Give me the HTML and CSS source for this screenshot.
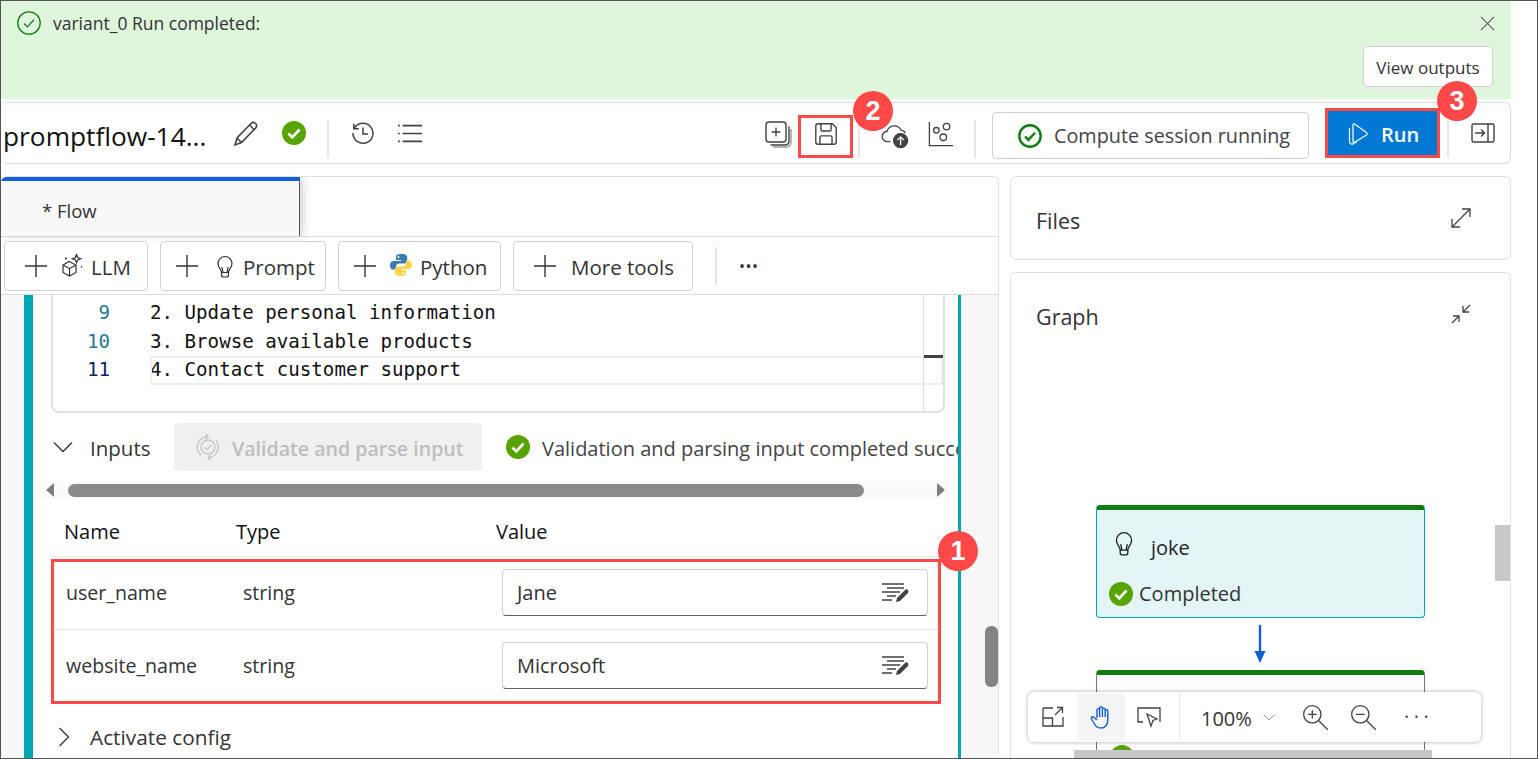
FILE: index.html
```html
<!DOCTYPE html>
<html lang="en">
<head>
  <meta charset="UTF-8" />
  <title>Prompt flow</title>
  <link rel="stylesheet" href="styles.css">
</head>
<body>
<div class="shot">

  <!-- Run banner -->
  <div class="banner">
    <div class="banner-msg">
      <svg class="ic24" viewBox="0 0 24 24" fill="none" stroke="#107c10" stroke-width="1.3"><circle cx="12" cy="12" r="11.2"/><path d="M7 12.5l3.4 3.4L17 8.8"/></svg>
      <span>variant_0 Run completed:</span>
    </div>
    <div class="banner-side">
      <svg class="close" viewBox="0 0 16 16" fill="none" stroke="#555" stroke-width="1.1"><path d="M1 1l14 14M15 1L1 15"/></svg>
      <button class="view-btn">View outputs</button>
    </div>
  </div>

  <!-- Flow toolbar -->
  <div class="toolbar">
    <span class="flow-name">promptflow-14...</span>
    <svg class="ic28 pencil" viewBox="0 0 28 28" fill="none" stroke="#424242" stroke-width="1.6"><path d="M3 25l2-7L19 3.500c1.500-1.400 3.300-1.200 4.600 0s1.400 3.200 0 4.600L9.500 22.500z"/><path d="M5 18l4.500 4.500M17.500 5l5 5"/></svg>
    <svg class="ic24 status" viewBox="0 0 24 24"><circle cx="12" cy="12" r="12" fill="#57a300"/><path d="M6.500 12.500l3.800 3.800 7.200-7.800" fill="none" stroke="#fff" stroke-width="2.600"/></svg>
    <i class="vline v1"></i>
    <svg class="ic24 hist" viewBox="0 0 24 24" fill="none" stroke="#424242" stroke-width="1.500"><path d="M3.200 7.500A10 10 0 1 1 2 12"/><path d="M2.800 2.800v5h5M12 6.500V13h5"/></svg>
    <svg class="ic28 list" viewBox="0 0 28 22" fill="none" stroke="#424242" stroke-width="1.700"><path d="M6 2.500h21M6 11h21M6 19.500h21M1 2.500h2M1 11h2M1 19.500h2"/></svg>

    <div class="toolbar-right">
      <svg class="ic28 t-add" viewBox="0 0 28 28" fill="none" stroke="#424242" stroke-width="1.400"><rect x="2" y="2" width="20" height="20" rx="3"/><path d="M12 7.500v9M7.500 12h9M25 6.500V21c0 2.500-1.500 4-4 4H6.500"/><path d="M27 9v13c0 3-2 5-5 5H9" stroke="#999"/></svg>
      <svg class="ic28 t-save" viewBox="0 0 28 28" fill="none" stroke="#424242" stroke-width="1.500"><path d="M3 5.500C3 4 4 3 5.500 3h15.500L25 7v15.500c0 1.500-1 2.500-2.500 2.500h-17C4 25 3 24 3 22.500z"/><path d="M8.500 3v6.500c0 .8.500 1.300 1.300 1.300h8.400c.8 0 1.300-.5 1.300-1.300V3M7.500 25v-7.500c0-1 .5-1.500 1.500-1.500h10c1 0 1.500.5 1.500 1.500V25"/></svg>
      <i class="vline v2"></i>
      <svg class="ic28 t-cloud" viewBox="0 0 30 30" fill="none" stroke="#424242" stroke-width="1.400"><path d="M10 22H7a5.500 5.500 0 0 1-.5-11A8 8 0 0 1 21.500 10a5 5 0 0 1 4.500 3"/><circle cx="21" cy="21" r="7.500" fill="#424242"/><path d="M21 26v-9M17.500 20.500L21 17l3.500 3.500" stroke="#fff"/></svg>
      <svg class="ic28 t-graph" viewBox="0 0 28 28" fill="none" stroke="#424242" stroke-width="1.400"><path d="M1.500 1v25.500H27"/><circle cx="9" cy="10" r="3"/><circle cx="20" cy="6" r="3.500"/><circle cx="16.500" cy="17.500" r="3.500"/></svg>
      <i class="vline v3"></i>
      <button class="compute-btn">
        <svg class="ic24" viewBox="0 0 24 24" fill="none"><circle cx="12" cy="12" r="10.700" stroke="#107c10" stroke-width="2.400"/><path d="M7 12.500l3.400 3.400L17 8.800" stroke="#107c10" stroke-width="2.400"/></svg>
        <span>Compute session running</span>
      </button>
      <button class="run-btn">
        <svg class="run-ic" viewBox="0 0 20 22" fill="none" stroke="#fff" stroke-width="1.200"><path d="M5 2c0-.9.800-1.300 1.500-.9L18.500 9.500c.9.600.9 1.900 0 2.500L6.500 19.300c-.7.400-1.500 0-1.500-.9z"/><path d="M1.500 5v13c0 2.800 2 3.800 4.200 2.600l3-1.800"/></svg>
        <span>Run</span>
      </button>
      <i class="vline v4"></i>
      <svg class="ic24 t-panel" viewBox="0 0 24 20" fill="none" stroke="#424242" stroke-width="1.400"><rect x="1" y="1" width="22" height="18" rx="1.500"/><path d="M17 1v18M4 10h9M10 6.500l3.500 3.500-3.500 3.500"/></svg>
    </div>
  </div>

  <div class="main">

    <!-- Left: flow editor -->
    <section class="card flow-panel">
      <div class="tabs">
        <div class="tab">* Flow</div>
      </div>
      <div class="tools">
        <button class="tool-btn">
          <svg class="plus" viewBox="0 0 22 22" stroke="#333" stroke-width="1.400"><path d="M11 0v22M0 11h22"/></svg>
          <svg class="ic24 tool-ic" viewBox="0 0 24 24" fill="none" stroke="#333" stroke-width="1.200"><path d="M9 8.500l7 3.500v7.500l-6.500 3.500L3 19.500V12zM3 12l6.500 3.500v7.500M9.500 15.500l6.500-3.500"/><path d="M16.500 1.500l1.200 3 3 1.200-3 1.200-1.200 3-1.200-3-3-1.200 3-1.200zM5 5.500h2M6 4.500v2M21.500 13v1.500"/></svg>
          <span>LLM</span>
        </button>
        <button class="tool-btn">
          <svg class="plus" viewBox="0 0 22 22" stroke="#333" stroke-width="1.400"><path d="M11 0v22M0 11h22"/></svg>
          <svg class="ic24 tool-ic bulb" viewBox="3 0 18 24" fill="none" stroke="#333" stroke-width="1.200"><path d="M8.500 18.500c0-3-3.500-4.500-3.500-9a7 7 0 0 1 14 0c0 4.500-3.500 6-3.500 9z"/><path d="M8.500 18.500v2.500c0 1.200 1 2 2 2h3c1 0 2-.8 2-2v-2.500M9 13l1 5.500M15 13l-1 5.500M9 8.500v.1M12 7.500v.1M15 8.500v.1"/></svg>
          <span>Prompt</span>
        </button>
        <button class="tool-btn">
          <svg class="plus" viewBox="0 0 22 22" stroke="#333" stroke-width="1.400"><path d="M11 0v22M0 11h22"/></svg>
          <svg class="ic24 tool-ic" viewBox="0 0 24 24"><path fill="#3a7cb2" d="M11.800 1C7 1 7 3 7 4.500V7h5v1H4.500C2.500 8 1 9.500 1 12.200S2.300 16.500 4.300 16.500H7v-2.700c0-2 1.700-3.300 3.500-3.300h5c1.500 0 2.700-1.200 2.700-2.700V4C18.200 2 16 1 11.800 1zM9.500 3a1 1 0 1 1 0 2 1 1 0 0 1 0-2z"/><path fill="#fdd44b" d="M12.200 23c4.800 0 4.800-2 4.800-3.500V17h-5v-1h7.500c2 0 3.500-1.500 3.500-4.200s-1.300-4.300-3.300-4.300H17v2.700c0 2-1.700 3.300-3.500 3.300h-5c-1.500 0-2.700 1.200-2.700 2.700V20C5.800 22 8 23 12.200 23zM14.500 21a1 1 0 1 1 0-2 1 1 0 0 1 0 2z"/></svg>
          <span>Python</span>
        </button>
        <button class="tool-btn more">
          <svg class="plus" viewBox="0 0 22 22" stroke="#333" stroke-width="1.400"><path d="M11 0v22M0 11h22"/></svg>
          <span>More tools</span>
        </button>
        <i class="vline v5"></i>
        <span class="dots">•••</span>
      </div>

      <div class="node-area">
        <div class="gutter"></div>
        <div class="node">
          <div class="editor">
            <div class="editor-lines">
              <div class="line"><span class="ln">9</span><span>2. Update personal information</span></div>
              <div class="line"><span class="ln">10</span><span>3. Browse available products</span></div>
              <div class="line cur"><span class="ln dark">11</span><span class="cur-text">4. Contact customer support</span></div>
            </div>
          </div>

          <div class="inputs-row">
            <svg class="chev" viewBox="0 0 20 12" fill="none" stroke="#333" stroke-width="1.300"><path d="M1 1.500l9 9 9-9"/></svg>
            <span class="sect">Inputs</span>
            <button class="validate-btn">
              <svg class="val-ic" viewBox="0 0 24 28" fill="none" stroke="#c4c4c4" stroke-width="1.300"><circle cx="12" cy="14" r="7"/><path d="M8.500 14.200l2.500 2.500 4.500-4.800"/><path d="M12 3.500A10.500 10.500 0 0 0 5.500 22.300M20 7.500A10.500 10.500 0 0 1 12 24.500"/><path d="M9.500 1L12 3.500 9.500 6M14.500 22l-2.500 2.500 2.500 2.500"/></svg>
              <span>Validate and parse input</span>
            </button>
            <svg class="ic24" viewBox="0 0 24 24"><circle cx="12" cy="12" r="12" fill="#57a300"/><path d="M6.500 12.500l3.800 3.800 7.200-7.800" fill="none" stroke="#fff" stroke-width="2.600"/></svg>
            <span class="valid-msg">Validation and parsing input completed successfully</span>
          </div>

          <div class="hscroll">
            <i class="arr-l"></i>
            <div class="hthumb"></div>
            <i class="arr-r"></i>
          </div>

          <div class="thead">
            <span class="th-name">Name</span>
            <span class="th-type">Type</span>
            <span>Value</span>
          </div>

          <div class="rows">
            <div class="row">
              <span class="c-name">user_name</span>
              <span class="c-type">string</span>
              <div class="val-box"><span>Jane</span><svg class="ic28" viewBox="0 0 28 24" fill="none" stroke="#424242" stroke-width="1.300"><path d="M1 3h22M6 7h17M1 11h18M6 15h9M1 19h10"/><path d="M15 21l1-4 8-8c1-1 2.500-1 3 0s.5 2 0 3l-8 8z" fill="#424242" stroke="none"/></svg></div>
            </div>
            <div class="row">
              <span class="c-name">website_name</span>
              <span class="c-type">string</span>
              <div class="val-box"><span>Microsoft</span><svg class="ic28" viewBox="0 0 28 24" fill="none" stroke="#424242" stroke-width="1.300"><path d="M1 3h22M6 7h17M1 11h18M6 15h9M1 19h10"/><path d="M15 21l1-4 8-8c1-1 2.500-1 3 0s.5 2 0 3l-8 8z" fill="#424242" stroke="none"/></svg></div>
            </div>
          </div>

          <div class="config-row">
            <svg class="chev-r" viewBox="0 0 12 20" fill="none" stroke="#333" stroke-width="1.300"><path d="M1.500 1l9 9-9 9"/></svg>
            <span class="sect">Activate config</span>
          </div>
        </div>
        <div class="side-track"><div class="side-thumb"></div></div>
      </div>
    </section>

    <!-- Right: files and graph -->
    <div class="right-col">
      <section class="card files">
        <span class="card-title">Files</span>
        <svg class="ic20" viewBox="0 0 20 20" fill="none" stroke="#424242" stroke-width="1.300"><path d="M1 19L19 1M11 1h8v8M1 11v8h8"/></svg>
      </section>
      <section class="card graph">
        <div class="graph-head">
          <span class="card-title">Graph</span>
          <svg class="ic20" viewBox="0 0 20 20" fill="none" stroke="#424242" stroke-width="1.300"><path d="M1 19l6.500-6.500M2 12h6v6M19 1l-6.500 6.500M18 8h-6V2"/></svg>
        </div>

        <div class="gnode joke">
          <div class="gnode-title">
            <svg class="bulb-lg" viewBox="3 0 18 24" fill="none" stroke="#222" stroke-width="1.200"><path d="M8.500 18.500c0-3-3.500-4.500-3.500-9a7 7 0 0 1 14 0c0 4.500-3.500 6-3.500 9z"/><path d="M8.500 18.500v2.500c0 1.200 1 2 2 2h3c1 0 2-.8 2-2v-2.500M9 13l1 5.500M15 13l-1 5.500M9 8.500v.1M12 7.500v.1M15 8.500v.1"/></svg>
            <span>joke</span>
          </div>
          <div class="gnode-status">
            <svg class="ic24" viewBox="0 0 24 24"><circle cx="12" cy="12" r="12" fill="#57a300"/><path d="M6.500 12.500l3.800 3.800 7.200-7.800" fill="none" stroke="#fff" stroke-width="2.600"/></svg>
            <span>Completed</span>
          </div>
        </div>
        <svg class="edge" viewBox="0 0 12 38"><path d="M6 0v28" stroke="#0f5fd8" stroke-width="2.400"/><path d="M.5 26h11L6 38z" fill="#0f5fd8"/></svg>
        <div class="gnode next">
          <svg class="ic24 next-check" viewBox="0 0 24 24"><circle cx="12" cy="12" r="12" fill="#57a300"/></svg>
        </div>

        <div class="gscroll-v"></div>
        <div class="gscroll-h"></div>

        <div class="zoombar">
          <div class="zb-btn"><svg class="ic24" viewBox="0 0 24 24" fill="none" stroke="#424242" stroke-width="1.300"><path d="M2 3h10M22 12v9H2V3M2 13h9.500v8M14 10l7.500-7.500M16 2.500h5.500V8"/></svg></div>
          <div class="zb-btn on"><svg class="ic24" viewBox="0 0 24 24" fill="none" stroke="#0f5fd8" stroke-width="1.400"><path d="M8 13V5c0-1.800 2.600-1.800 2.600 0V3c0-1.800 2.800-1.800 2.800 0v1.500c0-1.800 2.800-1.800 2.800 0V6c0-1.600 2.600-1.600 2.600 0v9.500c0 4.500-3 7.500-7 7.500-3 0-4.700-1.200-6-3.500L2.500 14c-.9-1.600 1-3 2.400-1.700L8 15M10.600 5v7M13.400 4v8M16.200 5v7"/></svg></div>
          <div class="zb-btn"><svg class="ic24" viewBox="0 0 24 24" fill="none" stroke="#424242" stroke-width="1.300"><path d="M6 17H1V3h22v14M10 9l10 5-4 1.500-2 5.500z"/></svg></div>
          <i class="zb-sep"></i>
          <span class="zb-pct">100%</span>
          <svg class="zb-caret" viewBox="0 0 12 7" fill="none" stroke="#999" stroke-width="1"><path d="M.5.5L6 6l5.500-5.500"/></svg>
          <svg class="zb-ic zb-in" viewBox="0 0 24 24" fill="none" stroke="#424242" stroke-width="1.200"><circle cx="9.500" cy="9.500" r="8"/><path d="M15.500 15.500L24 24M9.500 5.500v8M5.500 9.500h8"/></svg>
          <svg class="zb-ic zb-out" viewBox="0 0 24 24" fill="none" stroke="#424242" stroke-width="1.200"><circle cx="9.500" cy="9.500" r="8"/><path d="M15.500 15.500L24 24M5.500 9.500h8"/></svg>
          <span class="zb-dots">•••</span>
        </div>
      </section>
    </div>
  </div>

  <!-- Tutorial annotations -->
  <div class="mark save-mark"></div>
  <div class="mark run-mark"></div>
  <span class="badge b1">1</span>
  <span class="badge b2">2</span>
  <span class="badge b3">3</span>
</div>
</body>
</html>
```

FILE: styles.css
```css
* { box-sizing: border-box; }

body {
  margin: 0;
  background: #fff;
  color: #242424;
  font-family: "Open Sans", "Noto Sans", sans-serif;
  font-size: 20px;
}

button {
  font: inherit;
  color: inherit;
  background: #fff;
}

svg { display: block; flex: none; }
.ic20 { width: 20px; height: 20px; }
.ic24 { width: 24px; height: 24px; }
.ic28 { width: 28px; height: 28px; }

.vline {
  display: block;
  flex: none;
  width: 2px;
  background: #e6e6e6;
}

.shot {
  position: relative;
  width: 1538px;
  height: 759px;
  overflow: hidden;
  border: 1px solid #555;
}

/* banner */
.banner {
  display: flex;
  justify-content: space-between;
  width: 1510px;
  height: 98px;
  padding: 10px 18px 12px 16px;
  background: #dff6dd;
}
.banner-msg {
  display: flex;
  align-items: flex-start;
  gap: 12px;
  font-size: 17.500px;
  line-height: 24px;
  color: #333;
}
.banner-side {
  display: flex;
  flex-direction: column;
  align-items: flex-end;
  justify-content: space-between;
}
.close { width: 15px; height: 15px; margin: 5px -2px 0 0; }
.view-btn {
  width: 130px;
  height: 41px;
  border: 1px solid #d1d1d1;
  border-radius: 4px;
  font-size: 17px;
  padding: 2px 0 0;
  color: #333;
}

/* toolbar */
.toolbar {
  display: flex;
  align-items: center;
  width: 1510px;
  height: 62px;
  margin-top: 3px;
  padding-left: 2px;
  border: 1px solid #dcdcdc;
  border-left: 0;
  border-radius: 6px;
}
.flow-name { font-size: 26.300px; font-weight: 500; color: #111; width: 229px; white-space: nowrap; margin-top: 6px; }
.pencil { margin-right: 22px; margin-top: 1px; }
.status { margin-right: 21px; }
.v1 { height: 38px; margin: 11px 22px 0 0; }
.hist { margin-right: 22px; }
.list { width: 26px; height: 21px; }

.toolbar-right {
  display: flex;
  align-items: center;
  height: 100%;
  margin-left: auto;
}
.t-add { margin-right: 21px; margin-top: 2px; }
.t-save { width: 26px; height: 26px; margin-right: 19px; margin-top: 2px; }
.v2 { height: 38px; margin: 11px 21px 0 0; }
.t-cloud { width: 28px; height: 28px; margin-right: 19px; margin-top: 3px; }
.t-graph { width: 26px; height: 26px; margin-right: 20px; margin-top: 2px; }
.v3 { height: 38px; margin: 11px 16px 0 0; }

.compute-btn {
  display: flex;
  align-items: center;
  gap: 12px;
  width: 317px;
  height: 47px;
  margin: 5px 16px 0 0;
  padding: 0 0 0 25px;
  border: 1px solid #d1d1d1;
  border-radius: 4px;
  color: #444;
  font-size: 19.800px;
}
.compute-btn span { white-space: nowrap; }
.run-btn {
  display: flex;
  align-items: center;
  gap: 13px;
  width: 112px;
  height: 47px;
  padding: 2px 0 0 23px;
  border: 0;
  background: #0078d4;
  color: #fff;
  font-weight: 600;
  margin-right: 10px;
}
.run-ic { width: 20px; height: 22px; }
.v4 { height: 38px; margin: 11px 22px 0 0; }
.t-panel { height: 20px; margin-right: 15px; }

/* main area */
.main {
  display: flex;
  gap: 11px;
  width: 1510px;
  height: 583px;
  margin-top: 12px;
}
.card {
  border: 1px solid #e0e0e0;
  border-radius: 6px;
  background: #fff;
}

.flow-panel {
  display: flex;
  flex-direction: column;
  width: 998px;
  flex: none;
  overflow: hidden;
  border-left: 0;
  border-bottom: 0;
}
.tabs { height: 60px; flex: none; border-bottom: 1px solid #dcdcdc; }
.tab {
  width: 299px;
  height: 59px;
  padding: 17px 0 0 41px;
  background: #f8f8f8;
  border-top: 4px solid #0f5fd8;
  border-right: 1px solid #555;
  box-shadow: 4px 0 8px rgba(0, 0, 0, .15);
  font-size: 18.500px;
  line-height: 26px;
  color: #333;
}
.tools {
  display: flex;
  align-items: center;
  flex: none;
  height: 58px;
  padding-left: 3px;
  border-bottom: 1px solid #dcdcdc;
  font-size: 20.500px;
}
.tool-btn {
  display: flex;
  align-items: center;
  height: 50px;
  margin-right: 12px;
  padding: 2px 12px 0 20px;
  border: 1px solid #d1d1d1;
  border-radius: 4px;
  color: #333;
}
.plus { width: 22px; height: 22px; margin: -2px 13px 0 0; }
.tool-ic { margin: -4px 7px 0 0; }
.tool-ic.bulb { width: 18px; height: 24px; margin: -2px 9px 0 5px; }
.tool-btn:nth-child(1) { width: 144px; }
.tool-btn:nth-child(2) { width: 166px; padding-left: 15px; }
.tool-btn:nth-child(3) { width: 163px; padding-left: 15px; }
.tool-btn.more { width: 180px; margin-right: 22px; }
.tool-btn.more .plus { margin-right: 15px; }
.v5 { height: 38px; margin-right: 22px; }
.dots { font-size: 16px; letter-spacing: .5px; color: #333; }

/* node */
.node-area { display: flex; flex: 1; min-height: 0; }
.gutter { width: 23px; flex: none; background: #f8f8f8; }
.node {
  width: 937px;
  flex: none;
  border-left: 9px solid #00a7b3;
  border-right: 3px solid #00a7b3;
  overflow: hidden;
}
.side-track { flex: 1; position: relative; background: #f7f7f7; }
.side-thumb {
  position: absolute;
  top: 331px;
  right: 0;
  width: 13px;
  height: 61px;
  border-radius: 6px;
  background: #848484;
}

.editor {
  position: relative;
  width: 894px;
  height: 118px;
  margin-left: 18px;
  padding-top: 4px;
  border: 2px solid #e0e0e0;
  border-top: 0;
  border-radius: 0 0 8px 8px;
  font-family: "DejaVu Sans Mono", "Liberation Mono", monospace;
  font-size: 19.150px;
}
.editor::after {
  content: "";
  position: absolute;
  top: 0;
  bottom: 0;
  left: 870px;
  width: 1px;
  background: #dcdcdc;
}
.line {
  display: flex;
  height: 28.500px;
  line-height: 28.500px;
  color: #111;
  white-space: pre;
}
.ln { width: 57px; margin-right: 40px; text-align: right; color: #237893; }
.ln.dark { color: #0b216f; }
.cur-text {
  position: relative;
  flex: 1;
}
.cur-text::before {
  content: "";
  position: absolute;
  inset: 0;
  border: 2px solid #eee;
}
.cur-text::after {
  content: "";
  position: absolute;
  top: -1px;
  right: 0;
  width: 19px;
  height: 3px;
  background: #424242;
}

.inputs-row {
  display: flex;
  align-items: center;
  height: 48px;
  margin: 10px 0 0 20px;
  white-space: nowrap;
}
.chev { width: 20px; height: 12px; margin-right: 17px; flex: none; }
.sect { color: #333; font-weight: 500; font-size: 20.500px; }
.inputs-row .sect { width: 84px; flex: none; padding-top: 2px; }
.validate-btn {
  display: flex;
  align-items: center;
  gap: 12px;
  width: 308px;
  height: 48px;
  flex: none;
  margin-right: 24px;
  padding: 2px 0 0 22px;
  border: 0;
  border-radius: 4px;
  background: #f0f0f0;
  color: #bdbdbd;
  font-weight: 600;
  font-size: 19.600px;
}
.val-ic { width: 24px; height: 28px; margin-top: -2px; }
.inputs-row > .ic24 { flex: none; }
.valid-msg { margin-left: 12px; padding-top: 2px; color: #444; flex: none; }

.hscroll {
  display: flex;
  align-items: center;
  width: 910px;
  height: 18px;
  margin: 10px 0 0 5px;
  background: #fafafa;
}
.hthumb {
  width: 796px;
  height: 13px;
  margin: 0 0 0 14px;
  border-radius: 7px;
  background: #8b8b8b;
}
.arr-l, .arr-r { width: 0; height: 0; border: 7px solid transparent; }
.arr-l { margin-left: 8px; border-left: 0; border-right: 8px solid #7d7d7d; }
.arr-r { margin-left: 73px; border-right: 0; border-left: 8px solid #7d7d7d; }

.thead {
  display: flex;
  align-items: center;
  width: 894px;
  height: 58px;
  margin-left: 18px;
  padding: 7px 0 0 13px;
  border-bottom: 1px solid #e6e6e6;
  color: #111;
  font-weight: 500;
}
.th-name { width: 172px; }
.th-type { width: 260px; }

.rows {
  width: 890px;
  margin: 2px 0 0 18px;
  border: 3px solid #ff4848;
  font-size: 19.600px;
}
.row {
  display: flex;
  align-items: center;
  height: 67px;
  padding: 0 0 6px 12px;
  color: #333;
}
.row + .row { height: 72px; padding: 0 0 0 12px; border-top: 1px solid #e6e6e6; }
.c-name { width: 177px; }
.c-type { width: 259px; }
.val-box {
  display: flex;
  align-items: center;
  justify-content: space-between;
  width: 426px;
  height: 47px;
  padding: 0 18px 0 14px;
  border: 1px solid #d1d1d1;
  border-bottom-color: #616161;
  border-radius: 4px;
  font-size: 20px;
}
.config-row {
  display: flex;
  align-items: center;
  gap: 20px;
  height: 30px;
  margin: 18px 0 0 25px;
}
.config-row .sect { font-size: 20.800px; }
.chev-r { width: 12px; height: 20px; }

/* right column */
.right-col {
  display: flex;
  flex-direction: column;
  gap: 12px;
  width: 501px;
  flex: none;
}
.card-title { font-size: 21.500px; color: #333; }
.files {
  display: flex;
  align-items: center;
  justify-content: space-between;
  height: 84px;
  padding: 0 39px 0 25px;
}
.files .card-title { margin-top: 4px; }
.graph {
  position: relative;
  flex: 1;
  overflow: hidden;
  border-bottom: 0;
  border-radius: 6px 6px 0 0;
}
.graph-head {
  display: flex;
  align-items: center;
  justify-content: space-between;
  height: 86px;
  padding: 0 39px 0 25px;
}
.graph-head .ic20 { margin-top: -4px; }

/* canvas items */
.gnode {
  position: absolute;
  left: 85px;
  width: 329px;
  border-top: 5px solid #107c10;
  border-radius: 4px;
}
.joke {
  top: 232px;
  height: 113px;
  padding: 13px 12px;
  background: #e3f5f5;
  border-left: 1.500px solid #00a7b3;
  border-right: 1.500px solid #00a7b3;
  border-bottom: 1.500px solid #00a7b3;
  color: #242424;
}
.gnode-title { display: flex; align-items: center; gap: 17px; padding: 11px 0 0 5px; font-weight: 500; }
.bulb-lg { width: 20px; height: 26px; margin-top: -10px; }
.gnode-status { display: flex; align-items: center; gap: 6px; margin-top: 19px; font-size: 20px; color: #333; }
.next {
  top: 397px;
  height: 120px;
  border-left: 1.500px solid #757575;
  border-right: 1.500px solid #757575;
  background: #fff;
}
.next-check { position: absolute; top: 70px; left: 13px; }
.edge { position: absolute; left: 243px; top: 352px; width: 12px; height: 38px; }

.gscroll-v {
  position: absolute;
  top: 252px;
  left: 484px;
  width: 15px;
  height: 56px;
  background: #c8c8c8;
}
.gscroll-h {
  position: absolute;
  top: 477px;
  left: 63px;
  width: 358px;
  height: 9px;
  background: #c8c8c8;
}
.zoombar {
  position: absolute;
  top: 419px;
  left: 17px;
  display: flex;
  align-items: center;
  width: 453px;
  height: 50px;
  padding-left: 1px;
  background: #fff;
  border-radius: 6px;
  box-shadow: 0 0 4px rgba(0, 0, 0, .35);
}
.zb-btn {
  display: flex;
  align-items: center;
  justify-content: center;
  width: 48px;
  height: 48px;
}
.zb-btn.on { background: #f5f5f5; border-radius: 4px; }
.zb-sep { display: block; width: 1px; height: 48px; margin: 0 21px 0 6px; background: #e6e6e6; }
.zb-pct { font-size: 20px; color: #333; margin: 2px 11px 0 0; }
.zb-caret { width: 12px; height: 7px; margin-right: 27px; }
.zb-ic { width: 26px; height: 26px; }
.zb-in { margin-right: 22px; }
.zb-out { margin-right: 29px; }
.zb-dots { font-size: 10px; letter-spacing: 6px; color: #333; white-space: nowrap; }

/* annotations */
.mark {
  position: absolute;
  border: 3px solid #ff4848;
}
.save-mark { left: 797px; top: 114px; width: 55px; height: 43px; }
.run-mark { left: 1324px; top: 107px; width: 115px; height: 50px; }
.badge {
  position: absolute;
  width: 40px;
  height: 40px;
  border-radius: 50%;
  background: #ff4848;
  color: #fff;
  font-family: "Liberation Sans", sans-serif;
  font-size: 27px;
  font-weight: 700;
  line-height: 40px;
  text-align: center;
}
.b1 { left: 937px; top: 530px; }
.b2 { left: 852px; top: 90px; }
.b3 { left: 1436px; top: 80px; }
```
